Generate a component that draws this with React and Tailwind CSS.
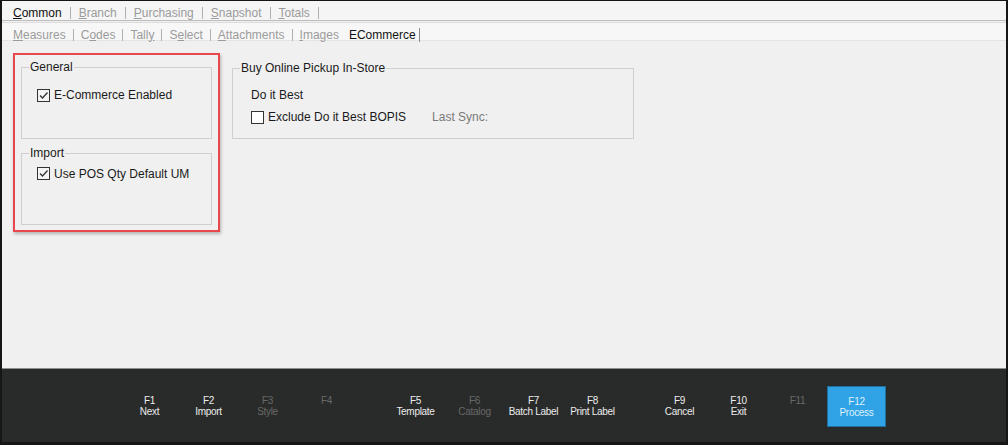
import React from "react";

const font = { fontFamily: '"Liberation Sans", Arial, sans-serif' };

function Check({ checked }) {
  return (
    <div className={`w-[13px] h-[13px] border border-[#333333] flex items-center justify-center shrink-0 ${checked ? "bg-[#f4f4f4]" : "bg-white"}`}>
      {checked && (
        <svg width="11" height="11" viewBox="0 0 11 11">
          <path d="M2 5.5 L4.5 8 L9.5 2.5" fill="none" stroke="#333333" strokeWidth="1.3" />
        </svg>
      )}
    </div>
  );
}

function Tab({ label, u, active, first, px = "px-[8px]" }) {
  const idx = label.indexOf(u);
  return (
    <div className="flex items-center">
      <span className={`${px} ${first ? "pl-[11px]" : ""} ${active ? "text-[#111111]" : "text-[#9b9b9b]"}`}>
        {u ? (
          <>
            {label.slice(0, idx)}
            <span className="underline">{u}</span>
            {label.slice(idx + u.length)}
          </>
        ) : (
          label
        )}
      </span>
      <div className="w-px h-[12px] bg-[#b0b0b0]" />
    </div>
  );
}

function FKey({ k, label, enabled, primary }) {
  return (
    <div
      className={`w-[59px] h-[41px] flex flex-col items-center pt-[9px] leading-[11px] text-[10px] tracking-[-0.3px] ${
        primary
          ? "bg-[#2fa3e6] border border-[#1f6f9f] pt-[8px] text-[#dff1fc]"
          : enabled
          ? "text-[#ececec]"
          : "text-[#686868]"
      }`}
    >
      <span>{k}</span>
      <span className="whitespace-nowrap">{label}</span>
    </div>
  );
}

export default function App() {
  return (
    <div style={font} className="w-[1008px] h-[445px] bg-[#161616] pt-px pl-[2px] pr-[2px] pb-[3px] flex flex-col overflow-hidden">
      <div className="flex-1 flex flex-col bg-[#f0f0f0]">
        {/* Tab row 1 */}
        <div className="h-[20px] pt-[4px] bg-[#f5f5f5] border-b border-[#bdbdbd] flex items-center text-[12px]">
          <Tab label="Common" u="C" active first />
          <Tab label="Branch" u="B" />
          <Tab label="Purchasing" u="P" />
          <Tab label="Snapshot" u="S" />
          <Tab label="Totals" u="T" />
        </div>
        {/* Tab row 2 */}
        <div className="h-[19px] mt-px pt-[6px] bg-[#f7f7f7] border-t border-[#dcdcdc] border-b border-b-[#e4e4e4] flex items-center text-[12px]">
          <Tab label="Measures" u="M" first px="px-[7px]" />
          <Tab label="Codes" u="o" px="px-[7px]" />
          <Tab label="Tally" u="y" px="px-[7px]" />
          <Tab label="Select" u="e" px="px-[7px]" />
          <Tab label="Attachments" u="A" px="px-[7px]" />
          <div className="flex items-center">
            <span className="px-[7px] text-[#9b9b9b]">
              <span className="underline">I</span>mages
            </span>
          </div>
          <div className="flex items-center">
            <span className="pl-[3px] pr-[3px] text-[#111111]">ECommerce</span>
            <div className="w-px h-[14px] bg-[#8a8a8a]" />
          </div>
        </div>

        {/* Content */}
        <div className="flex-1 flex items-start pt-[12px] pl-[11px] text-[12px] text-[#1a1a1a]">
          <div className="w-[207px] h-[179px] border-2 border-[#e8474b] shadow-[1px_2px_3px_rgba(0,0,0,0.25)] pl-[6px] pr-[6px] pt-[5px] flex flex-col gap-[7px]">
            <fieldset className="h-[79px] border border-[#cfcfcf]">
              <legend className="ml-[7px] px-px leading-[14px]">General</legend>
              <div className="flex items-center gap-[4px] mt-[12px] pl-[15px]">
                <Check checked />
                <span>E-Commerce Enabled</span>
              </div>
            </fieldset>
            <fieldset className="h-[79px] border border-[#cfcfcf]">
              <legend className="ml-[7px] px-px leading-[14px]">Import</legend>
              <div className="flex items-center gap-[4px] mt-[3px] pl-[15px]">
                <Check checked />
                <span className="pt-[2px]">Use POS Qty Default UM</span>
              </div>
            </fieldset>
          </div>

          <fieldset className="ml-[12px] mt-[8px] w-[402px] h-[78px] border border-[#cfcfcf]">
            <legend className="ml-[7px] px-px leading-[14px]">Buy Online Pickup In-Store</legend>
            <div className="pl-[18px]">
              <div className="mt-[11px]">Do it Best</div>
              <div className="flex items-center mt-[4px]">
                <Check />
                <span className="ml-[4px]">Exclude Do it Best BOPIS</span>
                <span className="ml-[26px] text-[#7a7a7a]">Last Sync:</span>
              </div>
            </div>
          </fieldset>
        </div>

        {/* Footer */}
        <div className="h-[74px] bg-[#292b2a] border-t border-[#8e8e8e] flex items-start pt-[17px] pl-[118px]">
          <FKey k="F1" label="Next" enabled />
          <FKey k="F2" label="Import" enabled />
          <FKey k="F3" label="Style" />
          <FKey k="F4" label="" />
          <div className="w-[30px]" />
          <FKey k="F5" label="Template" enabled />
          <FKey k="F6" label="Catalog" />
          <FKey k="F7" label="Batch Label" enabled />
          <FKey k="F8" label="Print Label" enabled />
          <div className="w-[28px]" />
          <FKey k="F9" label="Cancel" enabled />
          <FKey k="F10" label="Exit" enabled />
          <FKey k="F11" label="" />
          <FKey k="F12" label="Process" enabled primary />
        </div>
      </div>
    </div>
  );
}
